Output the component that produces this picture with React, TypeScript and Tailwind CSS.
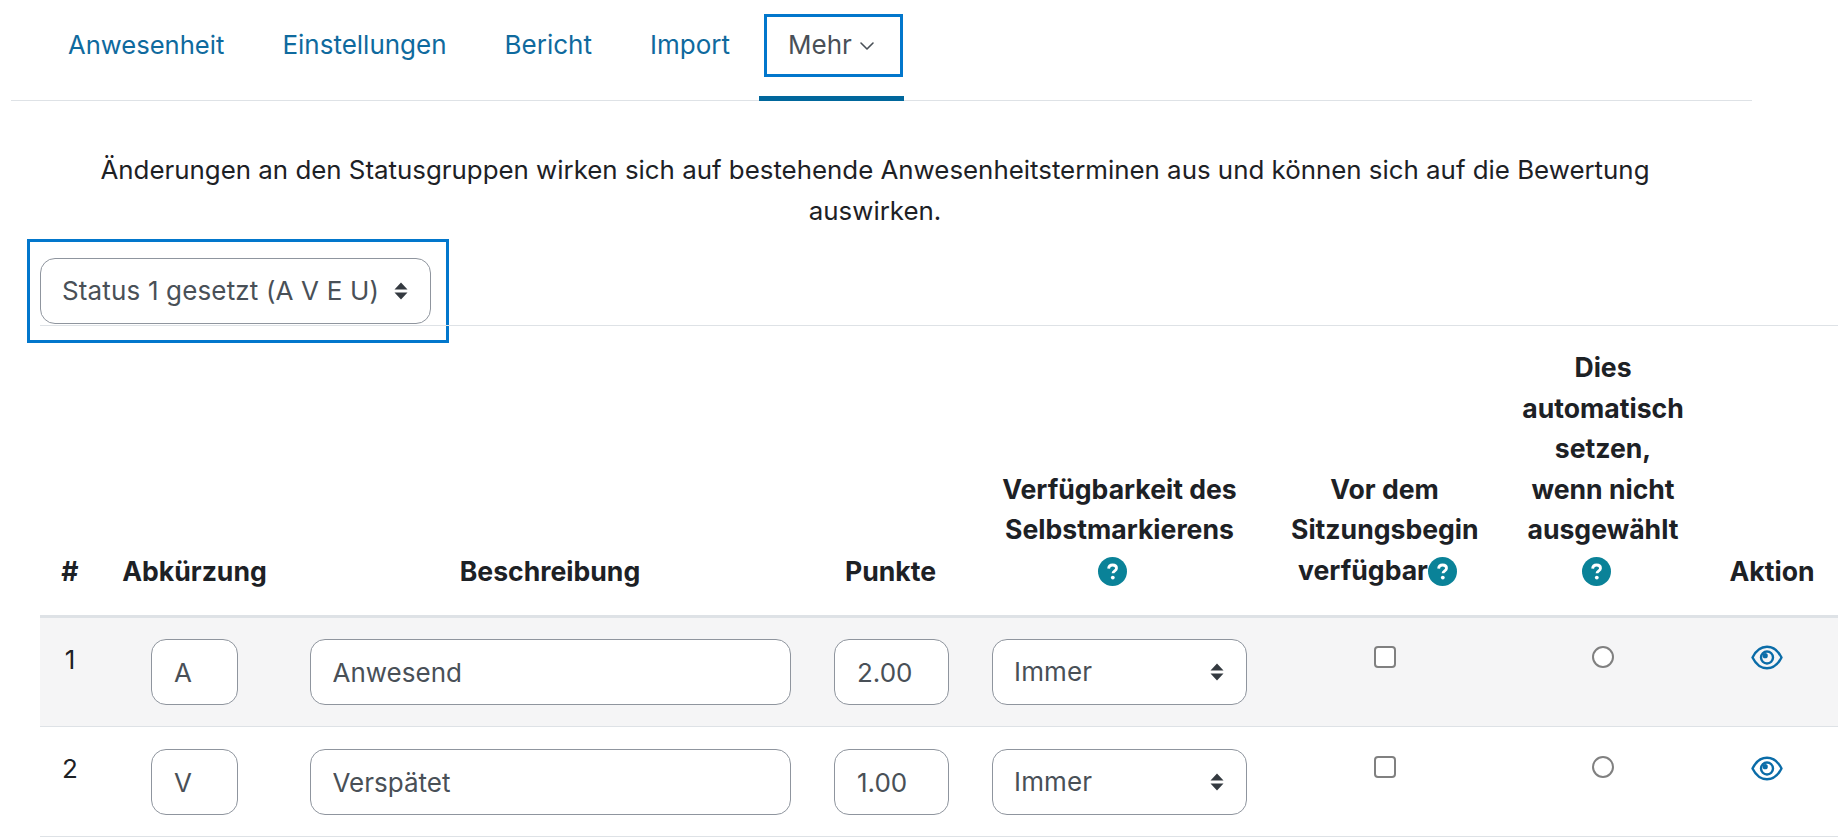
import { ChevronDown } from 'lucide-react';

const tabs = ['Anwesenheit', 'Einstellungen', 'Bericht', 'Import'];

const cols = [60, 189, 522, 159, 299, 231, 206, 132];

const rows = [
  { n: 1, abbr: 'A', label: 'Anwesend', points: '2.00' },
  { n: 2, abbr: 'V', label: 'Verspätet', points: '1.00' },
];

function SelectArrows() {
  return (
    <svg width="14" height="18" viewBox="0 0 14 18" className="shrink-0">
      <path d="M7 0.5 L13.5 7.5 H0.5 Z M0.5 10.5 H13.5 L7 17.5 Z" fill="#343a40" />
    </svg>
  );
}

function Help() {
  return (
    <svg width="29" height="29" viewBox="0 0 29 29" fill="none" className="mr-[14px] inline-block align-[-6px]">
      <circle cx="14.5" cy="14.5" r="14.5" fill="#0a8298" />
      <path d="M10.6 11.6 C10.8 9.2 12.4 8 14.6 8 C16.9 8 18.5 9.3 18.5 11.2 C18.5 13.8 15 13.8 15 16.3" stroke="#fff" strokeWidth="2.8" />
      <circle cx="14.8" cy="20.6" r="1.9" fill="#fff" />
    </svg>
  );
}

function Eye() {
  return (
    <svg width="32" height="25" viewBox="0 0 32 25" fill="none" className="mx-auto -translate-x-[5px] text-[#0a6ca8]">
      <path d="M1.5 12.5 C5 5.5 10 1.8 16 1.8 C22 1.8 27 5.5 30.5 12.5 C27 19.5 22 23.2 16 23.2 C10 23.2 5 19.5 1.5 12.5 Z" stroke="currentColor" strokeWidth="2.4" strokeLinejoin="round" />
      <circle cx="16" cy="12.5" r="6" stroke="currentColor" strokeWidth="2.4" />
      <circle cx="14.2" cy="10.7" r="2.6" fill="currentColor" />
    </svg>
  );
}

function FakeSelect({ text, className }: { text: string; className: string }) {
  return (
    <div className={`flex h-[66px] items-center justify-between rounded-[15px] border border-[#8f959e] bg-white pl-[21px] pr-[22px] text-[#495057] ${className}`}>
      <span className="tracking-[0.15px]">{text}</span>
      <SelectArrows />
    </div>
  );
}

function TextInput({ value, className }: { value: string; className: string }) {
  return (
    <input
      readOnly
      value={value}
      className={`h-[66px] rounded-[15px] border border-[#8f959e] bg-white px-[22px] text-[#495057] outline-none ${className}`}
    />
  );
}

export default function App() {
  return (
    <div className="h-[840px] w-[1838px] overflow-hidden bg-white font-['Inter',sans-serif] text-[26px] leading-[40.5px] text-[#1d2125]">
      <div className="ml-[11px] flex h-[101px] w-[1741px] border-b border-[#dee2e6] pl-[28px]">
        {tabs.map((t, i) => (
          <div key={t} className={`flex h-[90px] items-center px-[29px] text-[#0f6a9e] ${i === 0 ? 'text-[25.6px]' : ''}`}>
            {t}
          </div>
        ))}
        <div className="flex h-[101px] w-[145px] justify-end border-b-[5px] border-[#00679c] pr-[1px] pt-[14px]">
          <div className="flex h-[63px] w-[139px] items-center justify-center gap-[3px] border-[3px] border-[#0277cc] text-[#495057]">
            Mehr
            <ChevronDown size={24} strokeWidth={1.6} />
          </div>
        </div>
      </div>

      <p className="mt-[48px] w-[1750px] px-[60px] text-center text-[25.87px] leading-[41px]">
        Änderungen an den Statusgruppen wirken sich auf bestehende Anwesenheitsterminen aus und können sich auf die Bewertung auswirken.
      </p>

      <div className="ml-[27px] mt-[8px] h-[104px] w-[422px] border-[3px] border-[#0277cc] pl-[10px] pt-[16px]">
        <FakeSelect text="Status 1 gesetzt (A V E U)" className="w-[391px]" />
      </div>

      <table className="relative -mt-[18px] ml-[40px] w-[1798px] table-fixed border-t border-[#dee2e6]">
        <colgroup>
          {cols.map((w, i) => (
            <col key={i} style={{ width: w }} />
          ))}
        </colgroup>
        <thead>
          <tr className="border-b-[3px] border-[#dee2e6] text-center align-bottom text-[26.6px] font-bold">
            <th className="pb-[24px] pt-[21px]">#</th>
            <th className="pb-[24px] pt-[21px]">Abkürzung</th>
            <th className="pb-[24px] pt-[21px]">Beschreibung</th>
            <th className="pb-[24px] pt-[21px]">Punkte</th>
            <th className="px-[22px] pb-[25px] pt-[21px]">
              Verfügbarkeit des Selbstmarkierens <Help />
            </th>
            <th className="px-[22px] pb-[25px] pt-[21px]">
              Vor dem Sitzungsbegin verfügbar
              <Help />
            </th>
            <th className="px-[22px] pb-[25px] pt-[21px]">
              Dies automatisch setzen, wenn nicht ausgewählt <Help />
            </th>
            <th className="pb-[24px] pt-[21px]">Aktion</th>
          </tr>
        </thead>
        <tbody>
          {rows.map((r, i) => {
            const inputPad = i === 0 ? 'pt-[21px]' : 'pt-[22px]';
            const markPad = i === 0 ? 'pt-[28px]' : 'pt-[29px]';
            return (
              <tr key={r.n} className={`h-[110px] border-b border-[#dee2e6] align-top ${i === 0 ? 'bg-[#f5f5f6]' : ''}`}>
                <td className="pt-[22px] text-center">{r.n}</td>
                <td className={inputPad}>
                  <TextInput value={r.abbr} className="mx-auto block w-[87px]" />
                </td>
                <td className={inputPad}>
                  <TextInput value={r.label} className="mx-auto block w-[481px]" />
                </td>
                <td className={inputPad}>
                  <TextInput value={r.points} className="mx-auto block w-[115px] translate-x-[1px]" />
                </td>
                <td className={inputPad}>
                  <FakeSelect text="Immer" className="mx-auto w-[255px]" />
                </td>
                <td className={markPad}>
                  <input type="checkbox" readOnly className="mx-auto block h-[22px] w-[22px] appearance-none rounded-[4px] border-2 border-[#808080] bg-white" />
                </td>
                <td className={markPad}>
                  <input type="radio" readOnly className="mx-auto block h-[22px] w-[22px] appearance-none rounded-full border-2 border-[#808080] bg-white" />
                </td>
                <td className={i === 0 ? 'pt-[27px]' : 'pt-[29px]'}>
                  <Eye />
                </td>
              </tr>
            );
          })}
        </tbody>
      </table>
    </div>
  );
}
